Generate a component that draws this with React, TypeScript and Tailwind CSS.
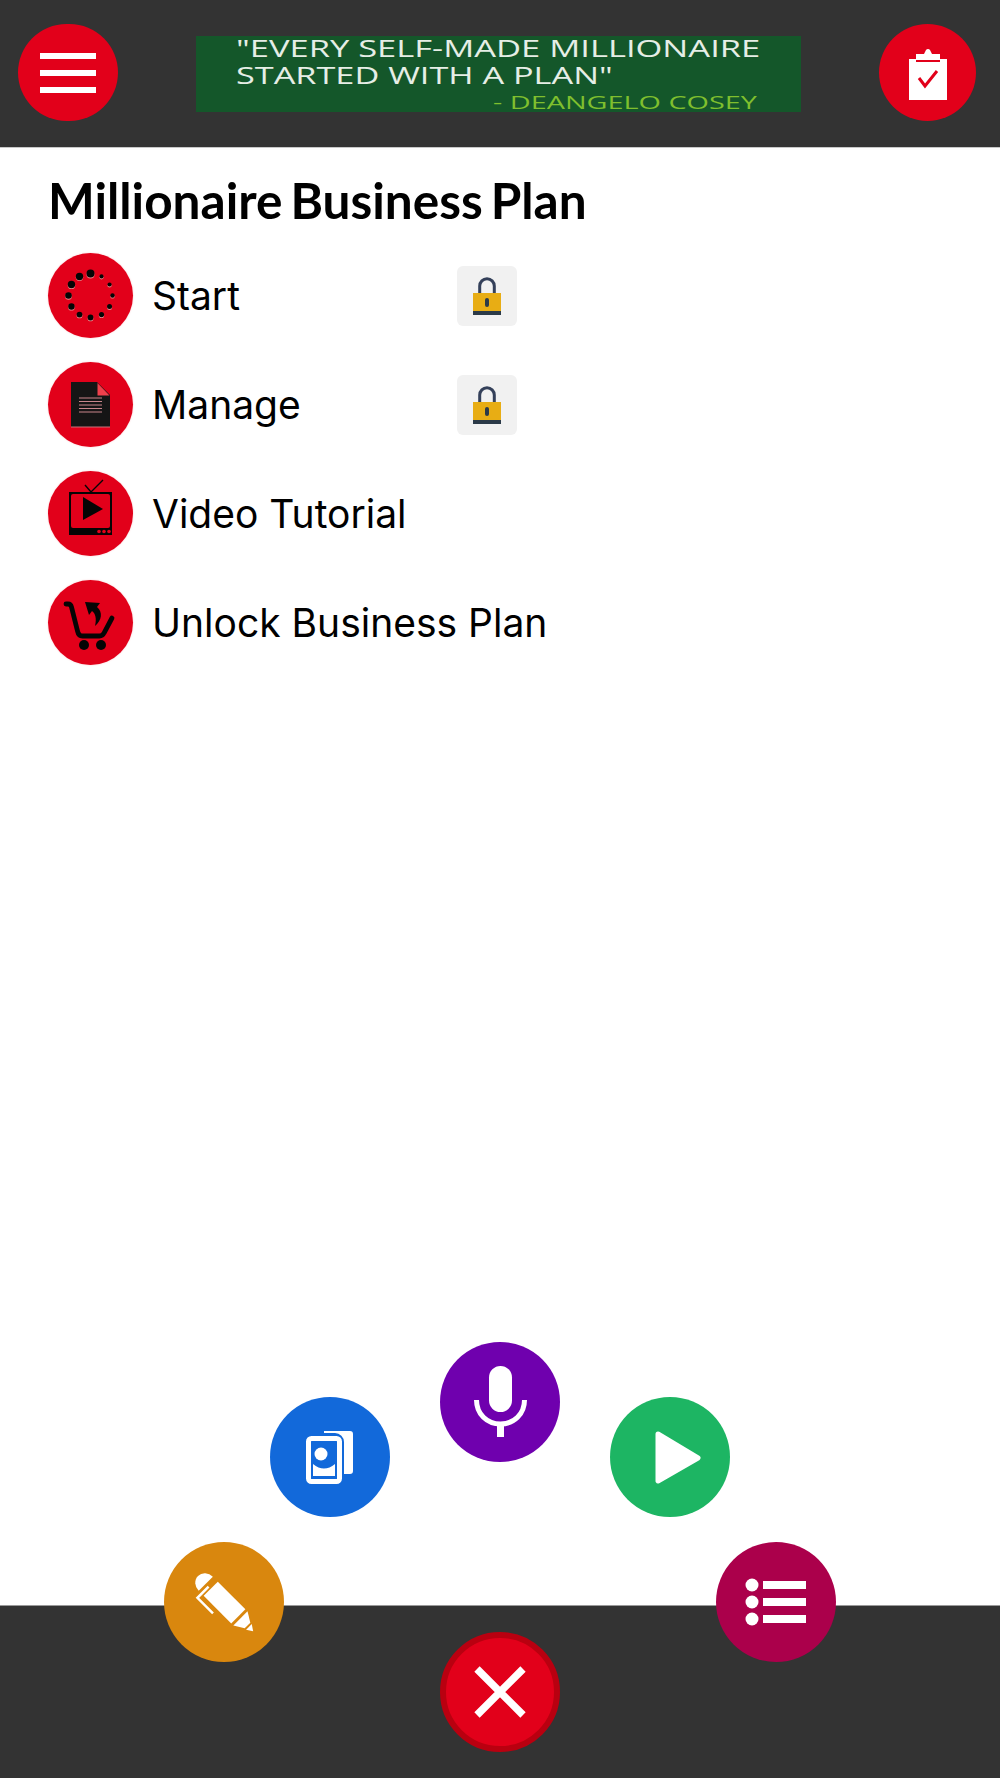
import type { ReactNode } from 'react';

const rowFont = { fontFamily: 'Inter, "Liberation Sans", sans-serif' };

function ClipboardIcon() {
  return (
    <svg width="38" height="52" viewBox="0 0 38 52" className="mt-[2px]">
      <path d="M0 11h7v3h24v-3h7v41H0z" fill="#fff" />
      <path d="M7 6h8l2-4a2.5 2.5 0 0 1 4 0l2 4h8v6H7z" fill="#fff" />
      <path d="M10 30l6 8 12-15" fill="none" stroke="#e2001a" strokeWidth="3" />
    </svg>
  );
}

function SpinnerIcon() {
  const dots = [
    [0, 4], [30, 2.1], [60, 2.1], [90, 2.2], [120, 2.5], [150, 2.6],
    [180, 2.9], [210, 2.9], [240, 3.2], [270, 3.3], [300, 3.7], [330, 3.7],
  ];
  return (
    <svg width="85" height="85" viewBox="0 0 85 85">
      {dots.map(([deg, r]) => {
        const a = (deg * Math.PI) / 180;
        const x = 42.5 + 22 * Math.sin(a);
        const y = 42.5 - 22 * Math.cos(a);
        return (
          <g key={deg}>
            <circle cx={x} cy={y + 0.9} r={r} fill="#f08a90" />
            <circle cx={x} cy={y} r={r} fill="#050505" />
          </g>
        );
      })}
    </svg>
  );
}

function DocIcon() {
  return (
    <svg width="85" height="85" viewBox="0 0 85 85">
      <path d="M23 20h26l13 13v32H23z" fill="#151515" />
      <path d="M49.500 21l12 12.500h-12z" fill="#f0404c" />
      <path d="M23 65h39" stroke="#c9747c" strokeWidth="1" />
      <path d="M31 36h23M31 39.500h23M31 43h23M31 46.500h23M31 50h23" stroke="#c9868c" strokeWidth="1.2" />
    </svg>
  );
}

function TvIcon() {
  return (
    <svg width="85" height="85" viewBox="0 0 85 85">
      <path d="M37 14l6 7 12-12" fill="none" stroke="#050505" strokeWidth="1.4" />
      <path d="M21 21h43v43H21z" fill="#050505" />
      <rect x="23" y="23" width="39" height="34" rx="2" fill="#e2001a" />
      <path d="M35 26l20 12-20 11z" fill="#050505" />
      <circle cx="51" cy="60.500" r="1.800" fill="#e2001a" />
      <circle cx="56" cy="60.500" r="1.800" fill="#e2001a" />
      <circle cx="61" cy="60.500" r="1.800" fill="#e2001a" />
    </svg>
  );
}

function CartIcon() {
  return (
    <svg width="85" height="85" viewBox="0 0 85 85">
      <path d="M18 24h2c2 0 3 1 3.500 3l6 24c.6 3 2 5 5 5h17c2.500 0 3.500-1 4.500-3l8-15" fill="none" stroke="#050505" strokeWidth="4.800" strokeLinecap="round" />
      <circle cx="36" cy="65" r="5" fill="#050505" />
      <circle cx="53" cy="65" r="5" fill="#050505" />
      <path d="M37 22l15 1-3 4c6 5 5 13-2 19 2-8 0-13-3-15l-3 4z" fill="#050505" />
    </svg>
  );
}

function LockIcon() {
  return (
    <svg width="28" height="38" viewBox="0 0 28 38">
      <path d="M6.700 17V9a7.300 7.300 0 0 1 14.600 0v8" fill="none" stroke="#34405a" strokeWidth="3" />
      <rect x="0" y="16" width="28" height="18" fill="#e8ad14" />
      <rect x="0" y="34" width="28" height="4" fill="#2b3a48" />
      <rect x="12" y="21" width="4" height="9" rx="2" fill="#2b3a48" />
    </svg>
  );
}

function ListRow({ icon, label, locked }: { icon: ReactNode; label: string; locked?: boolean }) {
  return (
    <div className="flex h-[85px] items-center">
      <div className="h-[85px] w-[85px] shrink-0 rounded-full bg-[#e2001a] shadow-[0_0_2px_#f8c8cc]">{icon}</div>
      <span className="ml-[19px] w-[305px] shrink-0 whitespace-nowrap text-[39px] leading-none text-black" style={rowFont}>
        {label}
      </span>
      {locked && (
        <div className="flex h-[60px] w-[60px] items-center justify-center rounded-md bg-[#f1f1f1]">
          <LockIcon />
        </div>
      )}
    </div>
  );
}

function Fab({ className, children }: { className: string; children: ReactNode }) {
  return (
    <div className={`absolute flex h-[120px] w-[120px] items-center justify-center rounded-full ${className}`}>
      {children}
    </div>
  );
}

export default function App() {
  return (
    <div className="relative flex h-[1778px] w-[1000px] flex-col overflow-hidden bg-white">
      <header className="flex h-[148px] shrink-0 items-start justify-between border-b border-[#c8c8c8] bg-[#333333] pl-[18px] pr-6 pt-6">
        <button className="flex h-[97px] w-[100px] flex-col items-center justify-center gap-[11px] rounded-full bg-[#e2001a]">
          <span className="h-[6px] w-[56px] bg-white" />
          <span className="h-[6px] w-[56px] bg-white" />
          <span className="h-[6px] w-[56px] bg-white" />
        </button>
        <div
          className="mt-3 flex h-[76px] w-[605px] flex-col bg-[#14572a] pl-10 pr-11 font-medium text-[#e6eee6]"
          style={{ fontFamily: '"Open Sans", sans-serif' }}
        >
          <span className="origin-left scale-x-[1.5] whitespace-nowrap text-[23px] leading-[24px]">"EVERY SELF-MADE MILLIONAIRE</span>
          <span className="mt-[3px] origin-left scale-x-[1.49] whitespace-nowrap text-[23px] leading-[24px]">STARTED WITH A PLAN"</span>
          <span className="mt-[7px] origin-right scale-x-[1.6] self-end whitespace-nowrap text-[18px] leading-[17px] text-[#7fbf2e]">
            - DEANGELO COSEY
          </span>
        </div>
        <button className="flex h-[97px] w-[97px] items-center justify-center rounded-full bg-[#e2001a]">
          <ClipboardIcon />
        </button>
      </header>

      <main className="flex-1 px-[48px] pt-[20px]">
        <h1
          className="text-[49.5px] font-bold leading-[64px] text-black [word-spacing:-4px]"
          style={{ fontFamily: 'Lato, sans-serif' }}
        >
          Millionaire Business Plan
        </h1>
        <div className="mt-[21px] flex flex-col gap-[24px]">
          <ListRow icon={<SpinnerIcon />} label="Start" locked />
          <ListRow icon={<DocIcon />} label="Manage" locked />
          <ListRow icon={<TvIcon />} label="Video Tutorial" />
          <ListRow icon={<CartIcon />} label="Unlock Business Plan" />
        </div>
      </main>

      <footer className="h-[173px] shrink-0 border-t border-[#9a9a9a] bg-[#333333]" />

      <Fab className="left-[270px] top-[1397px] bg-[#1269da]">
        <svg width="120" height="120" viewBox="0 0 120 120">
          <path d="M54 34h26a3 3 0 0 1 3 3v37a3 3 0 0 1-3 3h-6V45a9 9 0 0 0-9-9H54z" fill="#fff" />
          <rect x="38.500" y="41.500" width="31" height="43" rx="3" fill="none" stroke="#fff" strokeWidth="5" />
          <circle cx="51" cy="57" r="6.500" fill="#fff" />
          <path d="M43 67q11 9 22 0v12H43z" fill="#fff" />
        </svg>
      </Fab>
      <Fab className="left-[164px] top-[1542px] bg-[#d9870e]">
        <svg width="120" height="120" viewBox="0 0 120 120">
          <g transform="translate(34 34) rotate(45)" fill="#fff">
            <path d="M11-10A11 10 0 0 0 0 0a11 10 0 0 0 11 10z" />
            <rect x="18" y="-10" width="39" height="20" />
            <path d="M15 0v15.800h22" fill="none" stroke="#fff" strokeWidth="2.500" />
            <path d="M60-10l10 6v8l-10 6z" />
            <path d="M72-4l6 4-6 4z" />
          </g>
        </svg>
      </Fab>
      <Fab className="left-[440px] top-[1342px] bg-[#6f00ae]">
        <svg width="120" height="120" viewBox="0 0 120 120">
          <rect x="49" y="24" width="23" height="46" rx="11.500" fill="#fff" />
          <path d="M36.500 58c0 14 10.500 24 24 24s24-10 24-24" fill="none" stroke="#fff" strokeWidth="5" />
          <rect x="57" y="81" width="7" height="14" fill="#fff" />
        </svg>
      </Fab>
      <Fab className="left-[610px] top-[1397px] bg-[#1db563]">
        <svg width="120" height="120" viewBox="0 0 120 120">
          <path d="M48 37l40 24-40 23z" fill="#fff" stroke="#fff" strokeWidth="5" strokeLinejoin="round" />
        </svg>
      </Fab>
      <Fab className="left-[716px] top-[1542px] bg-[#ab004b]">
        <svg width="120" height="120" viewBox="0 0 120 120">
          <circle cx="36" cy="43" r="6.500" fill="#fff" />
          <circle cx="36" cy="60" r="6.500" fill="#fff" />
          <circle cx="36" cy="77" r="6.500" fill="#fff" />
          <rect x="47" y="39" width="43" height="8" fill="#fff" />
          <rect x="47" y="56" width="43" height="8" fill="#fff" />
          <rect x="47" y="73" width="43" height="8" fill="#fff" />
        </svg>
      </Fab>
      <Fab className="left-[440px] top-[1632px] border-[6px] border-[#b90010] bg-[#e2001a]">
        <svg width="54" height="54" viewBox="0 0 54 54">
          <path d="M4 4l46 46M50 4L4 50" stroke="#fff" strokeWidth="7.500" />
        </svg>
      </Fab>
    </div>
  );
}
